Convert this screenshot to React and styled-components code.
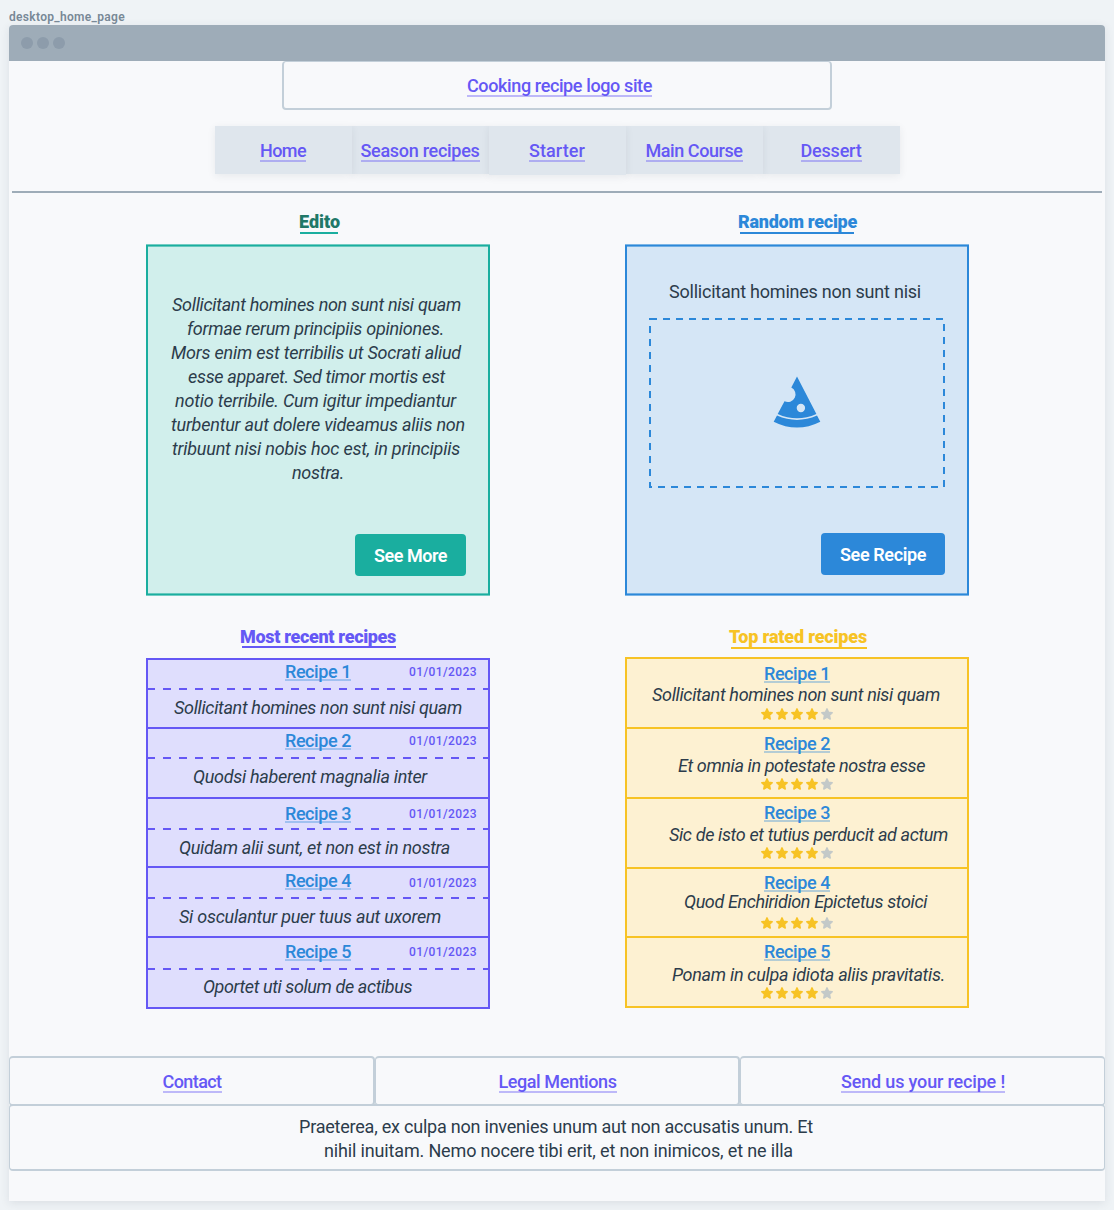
import React, { useLayoutEffect, useRef, useState } from "react";
import styled, { createGlobalStyle } from "styled-components";

const c = {
  purple: "#6558f5",
  blue: "#2c88d9",
  teal: "#1aae9f",
  tealDark: "#207868",
  yellow: "#f7c325",
  ink: "#2c3c4b",
  line: "#c3cfd9",
  bar: "#9eacb8",
};

const GlobalStyle = createGlobalStyle`
  * { box-sizing: border-box; }
  body { margin: 0; background: #eff3f6; overflow: hidden; }
  body, button { font-family: Roboto, "Liberation Sans", sans-serif; }
`;

const Page = styled.div`
  height: 1210px;
  padding: 0 9px;
  color: ${c.ink};
  font-size: 18px;
  line-height: 24px;
`;

const PageLabel = styled.div`
  height: 25px;
  padding-top: 5px;
  font-size: 12px;
  font-weight: 600;
  color: #788896;
`;

const Frame = styled.div`
  height: 1176px;
  background: #f8f9fb;
  border-radius: 4px 4px 0 0;
  box-shadow: 0 2px 10px rgba(39, 52, 68, 0.1);
`;

const TitleBar = styled.div`
  display: flex;
  align-items: center;
  gap: 4px;
  height: 36px;
  padding-left: 12px;
  background: ${c.bar};
  border-radius: 4px 4px 0 0;
`;

const Dot = styled.span`
  width: 12px;
  height: 12px;
  border-radius: 50%;
  background: #8d9cab;
`;

const Run = styled.span`
  display: inline-block;
  white-space: pre;
`;

/* Tracks the text out or in so that it fills the given width. */
function Fit({ w, children }) {
  const ref = useRef(null);
  const [spacing, setSpacing] = useState(0);
  useLayoutEffect(() => {
    const natural = ref.current.getBoundingClientRect().width;
    setSpacing((w - natural) / children.length);
  }, [w, children]);
  return (
    <Run ref={ref} style={{ letterSpacing: spacing }}>
      {children}
    </Run>
  );
}

const Link = styled.a`
  display: block;
  width: max-content;
  height: 24px;
  font-weight: 500;
  color: ${(p) => p.$color || c.purple};
  background: linear-gradient(${(p) => p.$line || "rgba(101,88,245,.4)"} 0 0) no-repeat 0
    ${(p) => p.$drop || 21}px / 100% 2px;
  cursor: pointer;
`;

const LogoBox = styled.div`
  display: flex;
  justify-content: center;
  width: 550px;
  height: 49px;
  margin: 0 auto;
  padding: 12px 0 0 5px;
  border: 2px solid ${c.line};
  border-top-width: 1px;
  border-radius: 4px;
`;

const Nav = styled.nav`
  display: flex;
  align-items: flex-start;
  height: 48px;
  width: 685px;
  margin: 16px 0 0 206px;
`;

const NavItem = styled.div`
  position: relative;
  z-index: ${(p) => p.$z};
  display: flex;
  justify-content: center;
  width: 137px;
  height: ${(p) => (p.$z === 3 ? 49 : 48)}px;
  padding: 13px 1px 0 0;
  background: #dfe6ed;
  box-shadow: 0 2px 8px rgba(39, 52, 68, 0.08);
`;

const Divider = styled.hr`
  height: 2px;
  margin: 17px 3px 0;
  border: 0;
  background: ${c.bar};
`;

const Main = styled.main`
  display: grid;
  grid-template-columns: 344px 344px;
  column-gap: 135px;
  padding: 17px 0 0 137px;
  height: 863px;
  align-content: start;
`;

const SectionTitle = styled.h2`
  width: max-content;
  height: 24px;
  margin: 0 0 0 ${(p) => p.$x}px;
  font-size: 18px;
  line-height: 24px;
  font-weight: 900;
  color: ${(p) => p.$color};
  background: linear-gradient(${(p) => p.$line || p.$color} 0 0) no-repeat ${(p) => p.$shift}px
    ${(p) => p.$drop}px / ${(p) => p.$len}px 2px;
`;

const Card = styled.section`
  display: flex;
  flex-direction: column;
  height: 350px;
  margin: 11px 0 30px;
  padding: 0 22px 19px;
  border: solid ${(p) => p.$color};
  border-width: 1px 2px;
  background: ${(p) => p.$bg};
  box-shadow: 0 -1px ${(p) => p.$color}99, 0 1px ${(p) => p.$color}99,
    inset 0 -1px ${(p) => p.$color}99, inset 0 1px ${(p) => p.$color}99;
`;

const Editorial = styled.p`
  margin: 47px 0 0;
  font-style: italic;
`;

const Line = styled.span`
  display: block;
  height: 24px;
  margin-left: ${(p) => p.$x}px;
`;

const RandomName = styled.div`
  margin: 34px 0 14px 20px;
  height: 24px;
`;

const Placeholder = styled.svg`
  display: block;
  width: 296px;
  height: 170px;
`;

const Button = styled.button`
  display: flex;
  justify-content: center;
  align-self: flex-end;
  width: ${(p) => p.$w}px;
  height: 42px;
  margin: auto 0 ${(p) => p.$lift}px;
  padding: 10px 0 0;
  border: 0;
  border-radius: 4px;
  background: ${(p) => p.$color};
  color: #fff;
  font-size: 18px;
  line-height: 24px;
  font-weight: 600;
  cursor: pointer;
`;

const List = styled.section`
  margin-top: ${(p) => p.$top}px;
  border: 2px solid ${(p) => p.$color};
  background: ${(p) => p.$bg};
`;

const Row = styled.article`
  height: ${(p) => p.$h}px;
  box-sizing: content-box;
  border-bottom: 2px solid ${(p) => p.$color};
  &:last-child {
    border-bottom: 0;
  }
`;

const RowHead = styled.header`
  display: flex;
  justify-content: space-between;
  align-items: flex-start;
  height: ${(p) => p.$h}px;
  padding: ${(p) => p.$top}px 11px 0 137px;
`;

const DateText = styled.time`
  margin-top: ${(p) => p.$top}px;
  font-size: 12px;
  font-weight: 500;
  color: ${c.purple};
`;

const Dashes = styled.div`
  height: 2px;
  margin-left: -1px;
  background: repeating-linear-gradient(90deg, ${c.purple} 0 8px, transparent 8px 16px);
`;

const Desc = styled.div`
  height: 24px;
  margin: ${(p) => p.$top}px 0 0 ${(p) => p.$x}px;
  font-style: italic;
`;

const RatedHead = styled.header`
  padding: ${(p) => p.$top}px 0 0 137px;
`;

const Stars = styled.div`
  display: flex;
  gap: 3px;
  margin: ${(p) => p.$top}px 0 0 134px;
  svg {
    display: block;
    width: 12px;
    height: 12px;
  }
`;

const FooterRow = styled.div`
  display: flex;
`;

const FooterCell = styled.div`
  display: flex;
  justify-content: center;
  width: ${(p) => p.$w}px;
  height: 50px;
  padding: 12px 0 0 1px;
  border: 2px solid ${c.line};
  border-left-width: 1px;
  border-right-width: ${(p) => (p.$last ? 1 : 2)}px;
  border-radius: 4px;
`;

const Note = styled.div`
  height: 67px;
  margin-top: -2px;
  padding-top: 9px;
  border: 2px solid ${c.line};
  border-width: 2px 1px;
  border-radius: 4px;
`;

const nav = [
  ["Home", 46, 2],
  ["Season recipes", 119, 1],
  ["Starter", 56, 3],
  ["Main Course", 97, 2],
  ["Dessert", 61, 1],
];

const editorial = [
  ["Sollicitant homines non sunt nisi quam", 289, 2],
  ["formae rerum principiis opiniones.", 257, 17],
  ["Mors enim est terribilis ut Socrati aliud", 290, 1],
  ["esse apparet. Sed timor mortis est", 257, 18],
  ["notio terribile. Cum igitur impediantur", 281, 5],
  ["turbentur aut dolere videamus aliis non", 294, 1],
  ["tribuunt nisi nobis hoc est, in principiis", 288, 2],
  ["nostra.", 52, 122],
];

const recent = [
  { text: "Sollicitant homines non sunt nisi quam", w: 288, x: 26, h: 67, head: 28, top: 0, date: 0, gap: 6 },
  { text: "Quodsi haberent magnalia inter", w: 234, x: 45, h: 68, head: 28, top: 0, date: 0, gap: 6 },
  { text: "Quidam alii sunt, et non est in nostra", w: 271, x: 31, h: 67, head: 29, top: 3, date: 0, gap: 6 },
  { text: "Si osculantur puer tuus aut uxorem", w: 262, x: 31, h: 68, head: 29, top: 1, date: 2, gap: 6 },
  { text: "Oportet uti solum de actibus", w: 209, x: 55, h: 69, head: 30, top: 2, date: 0, gap: 5 },
];

const rated = [
  { text: "Sollicitant homines non sunt nisi quam", w: 288, x: 25, h: 68, top: 3, gap: -3, stars: 1 },
  { text: "Et omnia in potestate nostra esse", w: 247, x: 51, h: 68, top: 3, gap: -2, stars: 0 },
  { text: "Sic de isto et tutius perducit ad actum", w: 279, x: 42, h: 68, top: 2, gap: -2, stars: 0 },
  { text: "Quod Enchiridion Epictetus stoici", w: 243, x: 57, h: 67, top: 2, gap: -5, stars: 3 },
  { text: "Ponam in culpa idiota aliis pravitatis.", w: 273, x: 45, h: 68, top: 2, gap: -1, stars: 0 },
];

function Star({ on }) {
  return (
    <svg viewBox="0 0 12 12">
      <path
        d="M6 .9 7.5 4.2 11.2 4.7 8.5 7.3 9.2 11 6 9.2 2.8 11 3.5 7.3 .8 4.7 4.500 4.2Z"
        fill={on ? c.yellow : "#c3c9c8"}
        stroke={on ? c.yellow : "#c3c9c8"}
        strokeWidth="1.500"
        strokeLinejoin="round"
      />
    </svg>
  );
}

function PizzaPlaceholder() {
  return (
    <Placeholder viewBox="0 0 296 170">
      <rect x="1" y="1" width="294" height="168" fill="none" stroke={c.blue} strokeWidth="2" strokeDasharray="7 6" />
      <g fill={c.blue}>
        <path
          fillRule="evenodd"
          d="M148 58.500 L167.400 96 Q148 104.600 128.700 96 L135.500 83.300 A7.400 7.400 0 1 0 142.300 69.600 Z M156.100 90 a4.200 4.200 0 1 0 -8.400 0 a4.200 4.200 0 1 0 8.400 0 Z"
        />
        <path d="M128 97.600 Q148 106.200 168 97.600 L171.300 103.700 Q148 115.500 124.700 103.700 Z" />
      </g>
    </Placeholder>
  );
}

export default function App() {
  return (
    <>
      <GlobalStyle />
      <Page>
        <PageLabel>
          <Fit w={116}>desktop_home_page</Fit>
        </PageLabel>
        <Frame>
          <TitleBar>
            <Dot />
            <Dot />
            <Dot />
          </TitleBar>
          <LogoBox>
            <Link>
              <Fit w={185}>Cooking recipe logo site</Fit>
            </Link>
          </LogoBox>
          <Nav>
            {nav.map(([label, w, z]) => (
              <NavItem key={label} $z={z}>
                <Link>
                  <Fit w={w}>{label}</Fit>
                </Link>
              </NavItem>
            ))}
          </Nav>
          <Divider />
          <Main>
            <div>
              <SectionTitle $x={153} $color={c.tealDark} $line={c.teal} $shift={1} $drop={22} $len={38}>
                <Fit w={41}>Edito</Fit>
              </SectionTitle>
              <Card $color={c.teal} $bg="#d1efec">
                <Editorial>
                  {editorial.map(([text, w, x]) => (
                    <Line key={text} $x={x}>
                      <Fit w={w}>{text}</Fit>
                    </Line>
                  ))}
                </Editorial>
                <Button $w={111} $lift={-1} $color={c.teal}>
                  <Fit w={73}>See More</Fit>
                </Button>
              </Card>
              <SectionTitle $x={94} $color={c.purple} $shift={2} $drop={21} $len={154}>
                <Fit w={156}>Most recent recipes</Fit>
              </SectionTitle>
              <List $top={9} $color={c.purple} $bg="#dfdefd">
                {recent.map((r, i) => (
                  <Row key={r.text} $h={r.h} $color={c.purple}>
                    <RowHead $h={r.head} $top={r.top}>
                      <Link $color={c.blue} $line="rgba(44,136,217,.35)" $drop={18.5}>
                        <Fit w={66}>{`Recipe ${i + 1}`}</Fit>
                      </Link>
                      <DateText $top={r.date}>
                        <Fit w={68}>01/01/2023</Fit>
                      </DateText>
                    </RowHead>
                    <Dashes />
                    <Desc $top={r.gap} $x={r.x}>
                      <Fit w={r.w}>{r.text}</Fit>
                    </Desc>
                  </Row>
                ))}
              </List>
            </div>
            <div>
              <SectionTitle $x={113} $color={c.blue} $shift={2} $drop={22} $len={114}>
                <Fit w={119}>Random recipe</Fit>
              </SectionTitle>
              <Card $color={c.blue} $bg="#d5e6f6">
                <RandomName>
                  <Fit w={252}>Sollicitant homines non sunt nisi</Fit>
                </RandomName>
                <PizzaPlaceholder />
                <Button $w={124} $lift={0} $color={c.blue}>
                  <Fit w={86}>See Recipe</Fit>
                </Button>
              </Card>
              <SectionTitle $x={104} $color={c.yellow} $shift={2} $drop={22} $len={136}>
                <Fit w={138}>Top rated recipes</Fit>
              </SectionTitle>
              <List $top={8} $color={c.yellow} $bg="#fdf1d2">
                {rated.map((r, i) => (
                  <Row key={r.text} $h={r.h} $color={c.yellow}>
                    <RatedHead $top={r.top}>
                      <Link $color={c.blue} $line="rgba(44,136,217,.35)" $drop={19}>
                        <Fit w={66}>{`Recipe ${i + 1}`}</Fit>
                      </Link>
                    </RatedHead>
                    <Desc $top={r.gap} $x={r.x}>
                      <Fit w={r.w}>{r.text}</Fit>
                    </Desc>
                    <Stars $top={r.stars}>
                      {[0, 1, 2, 3, 4].map((n) => (
                        <Star key={n} on={n < 4} />
                      ))}
                    </Stars>
                  </Row>
                ))}
              </List>
            </div>
          </Main>
          <footer>
            <FooterRow>
              <FooterCell $w={366}>
                <Link>
                  <Fit w={59}>Contact</Fit>
                </Link>
              </FooterCell>
              <FooterCell $w={365}>
                <Link>
                  <Fit w={118}>Legal Mentions</Fit>
                </Link>
              </FooterCell>
              <FooterCell $w={365} $last>
                <Link>
                  <Fit w={164}>Send us your recipe !</Fit>
                </Link>
              </FooterCell>
            </FooterRow>
            <Note>
              <Line $x={289}>
                <Fit w={514}>Praeterea, ex culpa non invenies unum aut non accusatis unum. Et</Fit>
              </Line>
              <Line $x={314}>
                <Fit w={469}>nihil inuitam. Nemo nocere tibi erit, et non inimicos, et ne illa</Fit>
              </Line>
            </Note>
          </footer>
        </Frame>
      </Page>
    </>
  );
}
